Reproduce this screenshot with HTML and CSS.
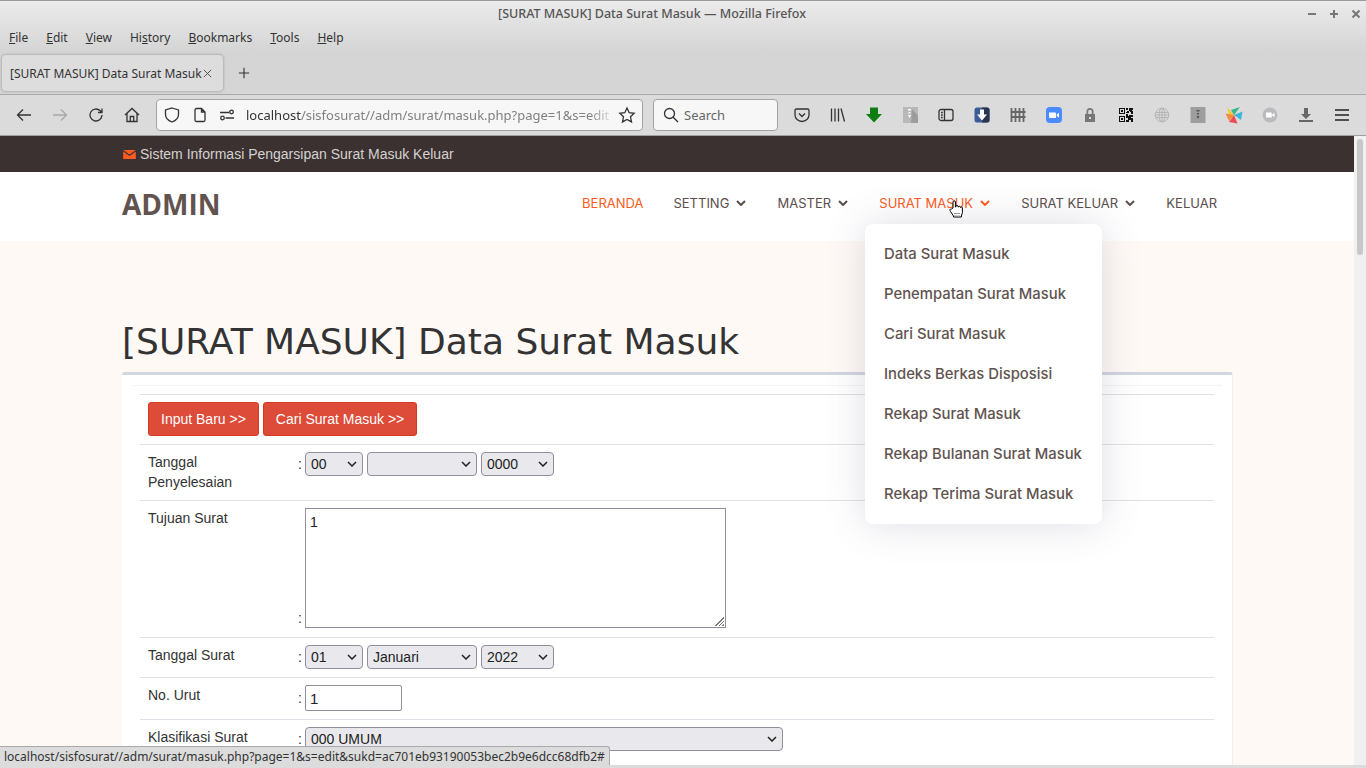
FILE: index.html
```html
<!DOCTYPE html>
<html lang="id">
<head>
<meta charset="utf-8">
<title>[SURAT MASUK] Data Surat Masuk</title>
<link rel="stylesheet" href="styles.css">
</head>
<body>
<div class="browser">
  <div class="topchrome">
    <div class="titlebar">
      <span class="wintitle">[SURAT MASUK] Data Surat Masuk — Mozilla Firefox</span>
      <div class="winctl">
        <svg class="wc" viewBox="0 0 10 10"><path d="M1 5h8"/></svg>
        <svg class="wc" viewBox="0 0 10 10"><path d="M1 5h8M5 1v8"/></svg>
        <svg class="wc" viewBox="0 0 10 10"><path d="M1.5 1.5l7 7M8.5 1.5l-7 7"/></svg>
      </div>
    </div>
    <div class="menubar">
      <span><u>F</u>ile</span><span><u>E</u>dit</span><span><u>V</u>iew</span><span>Hi<u>s</u>tory</span><span><u>B</u>ookmarks</span><span><u>T</u>ools</span><span><u>H</u>elp</span>
    </div>
    <div class="tabstrip">
      <div class="tab">
        <span class="tabtext">[SURAT MASUK] Data Surat Masuk</span>
        <svg class="tabx" viewBox="0 0 10 10"><path d="M1 1l8 8M9 1l-8 8"/></svg>
      </div>
      <svg class="newtab" viewBox="0 0 14 14"><path d="M7 1v12M1 7h12"/></svg>
    </div>
  </div>
  <div class="navbar">
    <div class="navbtns">
      <span class="tb"><svg class="ic" viewBox="0 0 16 16"><path d="M15 8H1.500M7 2.500L1.500 8 7 13.500"/></svg></span>
      <span class="tb dim"><svg class="ic" viewBox="0 0 16 16"><path d="M1 8h13.500M9 2.500L14.500 8 9 13.500"/></svg></span>
      <span class="tb"><svg class="ic" viewBox="0 0 16 16"><path d="M14 8a6 6 0 1 1-1.800-4.300L14 5.500M14 1.500v4h-4"/></svg></span>
      <span class="tb"><svg class="ic" viewBox="0 0 16 16"><path d="M1 8l7-6.500L15 8M3 6.500V14.500h10V6.500M6.300 14.500V9.500h3.400v5"/></svg></span>
    </div>
    <div class="urlbar">
      <svg class="ic shield" viewBox="0 0 16 16"><path d="M8 1l6.500 2v4.500c0 3.800-3 6.200-6.500 7.500-3.500-1.300-6.500-3.700-6.500-7.500V3z"/></svg>
      <svg class="ic pageic" viewBox="0 0 16 16"><path d="M4.500 1.500h5l3.500 3.500v8a1.500 1.500 0 0 1-1.500 1.500h-7A1.500 1.500 0 0 1 3 13V3a1.500 1.500 0 0 1 1.500-1.500zM9.500 1.500V5H13"/></svg>
      <svg class="ic perm" viewBox="0 0 16 16"><path d="M1 5.500h9M6.500 11H15"/><circle cx="12.500" cy="5" r="1.800"/><circle cx="3.500" cy="11" r="1.800"/></svg>
      <div class="urltext"><span class="host">localhost</span>/sisfosurat//adm/surat/masuk.php?page=1&amp;s=edit</div>
      <svg class="ic star" viewBox="0 0 16 16"><path d="M8 1l2.200 4.700 5 .6-3.700 3.500 1 5.100L8 12.400l-4.500 2.500 1-5.100L.8 6.300l5-.6z"/></svg>
    </div>
    <div class="searchbar">
      <svg class="ic" viewBox="0 0 16 16"><circle cx="6.500" cy="6.500" r="5"/><path d="M10.200 10.200L15 15"/></svg>
      <span class="searchtext">Search</span>
    </div>
    <div class="tools">
      <span class="tb"><svg class="ic" viewBox="0 0 16 16"><path d="M2.500 2h11A1.500 1.500 0 0 1 15 3.500V8A7 6.500 0 0 1 1 8V3.500A1.500 1.500 0 0 1 2.500 2zM5 6.500l3 3 3-3"/></svg></span>
      <span class="tb"><svg class="ic" viewBox="0 0 16 16"><path d="M1.500 1.500v13M5 1.500v13M8.500 1.500v13M11 1.500l3.500 13"/></svg></span>
      <span class="tb"><svg class="ic solid" viewBox="0 0 16 16"><path class="f-green" d="M4 .5h8V7h4L8 15.500 0 7h4z"/></svg></span>
      <span class="tb"><svg class="ic solid" viewBox="0 0 16 16"><path class="f-g1" d="M1 0h15v16H1z"/><path class="f-g2" d="M10 2l6 7v7H9z"/><path class="f-w" d="M6 2h3v1.500H6zM6.500 5H8.500v1.500H6.500zM6 8h3l-1.500 3z"/></svg></span>
      <span class="tb"><svg class="ic" viewBox="0 0 16 16"><rect x="1" y="2.500" width="14" height="11" rx="2"/><path d="M6.500 2.500v11M3 5.500h1.800M3 8h1.800M3 10.500h1.800"/></svg></span>
      <span class="tb"><svg class="ic solid" viewBox="0 0 16 16"><rect class="f-navy" x="0.500" y="0.500" width="15" height="15" rx="2.500"/><path class="f-dark" d="M8 0.500h5A2.500 2.500 0 0 1 15.500 3v10a2.500 2.500 0 0 1-2.500 2.500H8z"/><path class="f-w" d="M6 2.500h4v5h3l-5 6-5-6h3z"/></svg></span>
      <span class="tb"><svg class="ic fence" viewBox="0 0 16 16"><path d="M1.500 1v14M5.500 1v14M9.500 1v14M13.500 1v14M0.500 5h15M0.500 10h15"/></svg></span>
      <span class="tb"><svg class="ic solid" viewBox="0 0 16 16"><rect class="f-zoom" width="16" height="16" rx="4"/><path class="f-w" d="M3 5.500h6a1 1 0 0 1 1 1V11H4a1 1 0 0 1-1-1zM10.700 7.500L13 5.800v4.900L10.700 9z"/></svg></span>
      <span class="tb"><svg class="ic solid" viewBox="0 0 16 16"><path class="f-lock" fill-rule="evenodd" d="M4.500 7V4.500a3.500 3.500 0 0 1 7 0V7H13v8H3V7zM6.200 7h3.600V4.500a1.800 1.800 0 0 0-3.600 0zM7 10v2h2v-2z"/></svg></span>
      <span class="tb"><svg class="ic solid" viewBox="0 0 16 16"><path class="f-k" fill-rule="evenodd" d="M1 1h6v6H1zM2 2v4h4V2zM1 9h6v6H1zM2 10v4h4v-4zM3 3h2v2H3zM3 11h2v2H3zM8 1h2v2H8zM11 1h4v2h-1v1h1v3h-2V5h-1V4h-1v2H8V5h1V4h2zM8 7h2v2H8zM11 8h4v2h-2v1h2v4h-2v-2h-2v2H8v-2h2v-2H8V9h3z"/></svg></span>
      <span class="tb"><svg class="ic globe" viewBox="0 0 16 16"><circle cx="8" cy="8" r="6.800"/><ellipse cx="8" cy="8" rx="3" ry="6.800"/><path d="M1.500 5.500h13M1.500 10.500h13M1.200 8h13.600M8 1.200v13.600"/></svg></span>
      <span class="tb"><svg class="ic solid" viewBox="0 0 16 16"><rect class="f-g3" width="15" height="16" x="0.500"/><path class="f-g4" d="M6.500 3h3v1.500h-3zM7 6h2v1.500H7zM6.500 9h3L8 12z"/></svg></span>
      <span class="tb"><svg class="ic wheel solid" viewBox="0 0 16 16"><path class="f-yel" d="M1 0l7 8H3z"/><path class="f-grn" d="M14 0L8 8 5 3z"/><path class="f-cy" d="M16.500 4.500L15 13 8 8z"/><path class="f-red" d="M8 8l3.500 8.500L3 15z"/><path class="f-org" d="M-.5 6.500L8 8l-5 6z"/></svg></span>
      <span class="tb"><svg class="ic solid" viewBox="0 0 16 16"><circle class="f-g5" cx="8" cy="8" r="7.500"/><path class="f-w" d="M4 5.500h5a.8.800 0 0 1 .8.800V10.500H4.800a.8.800 0 0 1-.8-.800zM10.300 7.300L12.500 6v4l-2.200-1.300z"/></svg></span>
      <span class="tb"><svg class="ic solid" viewBox="0 0 16 16"><path class="f-g6" d="M6 1h4v6h3l-5 5-5-5h3zM1 13h14v2H1z"/></svg></span>
      <span class="tb"><svg class="ic burger" viewBox="0 0 16 16"><path d="M1 3h14M1 8h14M1 13h14"/></svg></span>
    </div>
  </div>

  <div class="viewport">
    <div class="page">
      <div class="infobar">
        <div class="wrap infotext">
          <svg class="mail" viewBox="0 0 14 10"><path class="f-orange" d="M0 0h14L7 5zM0 1.700l7 5 7-5V10H0z"/></svg>
          <span>Sistem Informasi Pengarsipan Surat Masuk Keluar</span>
        </div>
      </div>
      <header class="header">
        <div class="wrap headrow">
          <div class="logo">ADMIN</div>
          <ul class="nav">
            <li class="active">BERANDA</li>
            <li>SETTING <svg class="chev" viewBox="0 0 10 6"><path d="M1 1l4 4 4-4"/></svg></li>
            <li>MASTER <svg class="chev" viewBox="0 0 10 6"><path d="M1 1l4 4 4-4"/></svg></li>
            <li class="active">SURAT MASUK <svg class="chev" viewBox="0 0 10 6"><path d="M1 1l4 4 4-4"/></svg></li>
            <li>SURAT KELUAR <svg class="chev" viewBox="0 0 10 6"><path d="M1 1l4 4 4-4"/></svg></li>
            <li>KELUAR</li>
          </ul>
        </div>
      </header>
      <main class="content">
        <h1 class="pagetitle">[SURAT MASUK] Data Surat Masuk</h1>
        <section class="card">
          <div class="cardhead"></div>
          <div class="cardbody">
            <table class="formtable">
              <colgroup><col class="col-l"><col class="col-v"></colgroup>
              <tr>
                <td colspan="2"><div class="btns"><a class="btn">Input Baru &gt;&gt;</a><a class="btn">Cari Surat Masuk &gt;&gt;</a></div></td>
              </tr>
              <tr>
                <td>Tanggal Penyelesaian</td>
                <td><div class="val"><span class="colon">:</span>
                  <select class="sel s-d"><option>00</option></select>
                  <select class="sel s-m"><option></option></select>
                  <select class="sel s-y"><option>0000</option></select>
                </div></td>
              </tr>
              <tr>
                <td>Tujuan Surat</td>
                <td><div class="val end"><span class="colon">:</span><div class="areawrap"><textarea class="area">1</textarea></div></div></td>
              </tr>
              <tr>
                <td>Tanggal Surat</td>
                <td><div class="val"><span class="colon">:</span>
                  <select class="sel s-d"><option>01</option></select>
                  <select class="sel s-m"><option>Januari</option></select>
                  <select class="sel s-y"><option>2022</option></select>
                </div></td>
              </tr>
              <tr>
                <td>No. Urut</td>
                <td><div class="val"><span class="colon">:</span><input class="inp" type="text" value="1"></div></td>
              </tr>
              <tr>
                <td>Klasifikasi Surat</td>
                <td><div class="val"><span class="colon">:</span><select class="sel s-k"><option>000 UMUM</option></select></div></td>
              </tr>
            </table>
          </div>
        </section>
      </main>
    </div>
    <div class="vscroll"><div class="thumb"></div></div>

    <ul class="dropdown">
      <li>Data Surat Masuk</li>
      <li>Penempatan Surat Masuk</li>
      <li>Cari Surat Masuk</li>
      <li>Indeks Berkas Disposisi</li>
      <li>Rekap Surat Masuk</li>
      <li>Rekap Bulanan Surat Masuk</li>
      <li>Rekap Terima Surat Masuk</li>
    </ul>

    <svg class="cursor" viewBox="0 0 14 18"><path d="M4 8V2a1.200 1.200 0 0 1 2.400 0v5h.6V6a1.100 1.100 0 0 1 2 0v1h.6a1 1 0 0 1 1.900 0v.6a1 1 0 0 1 1.900.4v4.500l-1 3.500v1H4.500v-1L1.500 11.500C.5 10 1 8.500 2.500 9z"/><path class="cursor-d" d="M6 13v2.500M8 13v2.500M10 13v2.500"/></svg>

    <div class="status">localhost/sisfosurat//adm/surat/masuk.php?page=1&amp;s=edit&amp;sukd=ac701eb93190053bec2b9e6dcc68dfb2#</div>
  </div>
  <div class="bottomstrip"></div>
</div>
</body>
</html>
```

FILE: styles.css
```css
* { box-sizing: border-box; }
html, body { margin: 0; padding: 0; height: 100%; overflow: hidden; }
body { font-family: "Liberation Sans", Arial, sans-serif; font-size: 14px; color: #333; }
.browser { width: 1366px; height: 768px; display: flex; flex-direction: column; overflow: hidden; }

/* browser chrome */
.topchrome { height: 94px; background: linear-gradient(#ebebeb 0, #d5d5d5 50px, #d5d5d5 100%); border-top: 1px solid #9a9a9a; display: flex; flex-direction: column; font-family: "Noto Sans", sans-serif; }
.titlebar { height: 24px; padding-left: 498px; display: flex; align-items: center; justify-content: space-between; }
.wintitle { font-size: 12.5px; font-weight: 500; color: #555; white-space: nowrap; }
.winctl { display: flex; gap: 12px; padding-right: 5px; padding-top: 1px; }
.wc { width: 10px; height: 10px; fill: none; stroke: #777; stroke-width: 2; }
.menubar { height: 25px; padding-left: 9px; display: flex; align-items: center; gap: 18px; font-size: 12px; color: #333; }
.tabstrip { flex: 1; display: flex; align-items: center; padding: 5px 0 3px 2px; }
.tab { width: 221px; height: 36px; background: #dddddd; border-radius: 4px; box-shadow: 0 0 3px rgba(0,0,0,.35); display: flex; align-items: center; padding-left: 8px; }
.tabtext { font-size: 12px; color: #333; white-space: nowrap; width: 193px; overflow: hidden; }
.tabx { width: 9px; height: 9px; fill: none; stroke: #444; stroke-width: 1; margin-left: 0; }
.newtab { width: 12px; height: 12px; margin-left: 15px; fill: none; stroke: #333; stroke-width: 1.300; }

.navbar { height: 42px; background: #dbdbdb; border-top: 1px solid #a9a9a9; border-bottom: 1px solid #a0a0a0; display: flex; align-items: center; padding: 0 6px; font-family: "Noto Sans", sans-serif; }
.navbtns, .tools { display: flex; }
.tools { margin-left: 6px; }
.tb { width: 36px; height: 32px; display: flex; align-items: center; justify-content: center; }
.ic { width: 16px; height: 16px; fill: none; stroke: #333; stroke-width: 1.300; flex: none; overflow: visible; }
.ic.solid { stroke: none; }
.dim .ic { stroke: #a8a8a8; }
.urlbar { width: 487px; height: 32px; margin-left: 6px; background: #f7f7f7; border: 1px solid #a2a2a2; border-radius: 4px; display: flex; align-items: center; padding-left: 7px; font-size: 13px; color: #808080; }
.shield { margin-left: 0; }
.pageic { margin-left: 12px; }
.perm { margin-left: 11px; }
.urltext { margin-left: 11px; width: 369px; white-space: nowrap; mask-image: linear-gradient(to right, #000 93%, transparent); }
.host { color: #333; }
.star { margin-left: 4px; }
.searchbar { width: 125px; height: 32px; margin-left: 10px; background: #f7f7f7; border: 1px solid #a2a2a2; border-radius: 4px; display: flex; align-items: center; padding-left: 9px; font-size: 13px; color: #666; }
.searchtext { margin-left: 5px; }
.f-green { fill: #0e7d12; }
.f-g1 { fill: #b8b8b8; }
.f-g2 { fill: #9c9c9c; }
.f-w { fill: #fff; }
.f-navy { fill: #3b5a9a; }
.f-dark { fill: #2a3550; }
.fence { stroke: #666; stroke-width: 1.800; }
.f-zoom { fill: #4a8cff; }
.f-lock { fill: #777; }
.f-k { fill: #111; }
.globe { stroke: #b5b5b5; stroke-width: 1; }
.f-g3 { fill: #9e9e9e; }
.f-g4 { fill: #555; }
.f-yel { fill: #f7c92e; }
.f-grn { fill: #37b88a; }
.f-cy { fill: #38b6dc; }
.f-red { fill: #ee4b55; }
.f-org { fill: #f58b3c; }
.f-g5 { fill: #bbbbbf; }
.f-g6 { fill: #666; }
.burger { stroke: #222; stroke-width: 1.500; }

/* viewport */
.viewport { flex: 1; min-height: 0; position: relative; display: flex; background: #fff9f6; }
.page { flex: 1; min-width: 0; overflow: hidden; }
.vscroll { width: 12px; background: #f0f0f0; padding: 3px 3px 0; }
.thumb { height: 116px; border-radius: 3px; background: #c8c8c8; }
.bottomstrip { height: 3px; background: #dcdcdc; }

.wrap { width: 1110px; margin-left: 122px; }
.infobar { height: 36px; background: #3b3130; }
.infotext { height: 36px; display: flex; align-items: center; color: #d4d2d0; font-size: 14px; }
.mail { width: 13px; height: 9px; margin: 0 4px 0 1px; }
.f-orange { fill: #fd5b22; }

.header { height: 69px; background: #fff; }
.headrow { height: 62px; display: flex; align-items: center; justify-content: space-between; padding-right: 15px; }
.logo { font-family: "Open Sans", sans-serif; font-weight: 700; font-size: 28px; color: #62534f; padding-top: 2px; }
.nav { display: flex; gap: 30px; list-style: none; margin: 0; padding: 0; font-family: Inter, sans-serif; font-size: 13px; color: #5a4e4b; }
.nav li { display: flex; align-items: center; white-space: pre; }
.nav .active { color: #fd5b22; }
.chev { width: 10px; height: 6px; margin: 0 1.500px 0 3px; fill: none; stroke: currentColor; stroke-width: 2; }

.content { padding: 0 122px; }
.pagetitle { margin: 0; height: 131px; padding-top: 78px; font-family: "DejaVu Sans", sans-serif; font-weight: 400; font-size: 36px; line-height: 46px; color: #333; white-space: nowrap; }
.card { width: 1111px; min-height: 500px; background: #fff; border-top: 3px solid #d2d6de; border-right: 1px solid #f5eeea; border-radius: 3px; }
.cardhead { height: 11px; margin: 0 10px; border-bottom: 1px solid #f4f4f4; }
.cardbody { padding: 8px 17px 0 18px; }
.formtable { width: 1074px; border-collapse: collapse; table-layout: fixed; }
.col-l { width: 150px; }
.formtable td { border-top: 1px solid #e0e0e6; padding: 7px 8px 8px; line-height: 20px; vertical-align: top; }
.btns { display: flex; gap: 4px; }
.btn { display: block; height: 34px; padding: 6px 12px; background: #dd4b39; border: 1px solid #d73925; border-radius: 3px; color: #fff; font-size: 14px; line-height: 20px; }
.val { display: flex; align-items: center; gap: 4px; }
.val.end { align-items: flex-end; margin-bottom: 1px; }
.colon { width: 3px; }
.sel { appearance: none; height: 24px; padding: 0 16px 0 5px; font: 14px "Liberation Sans", Arial, sans-serif; color: #222; border: 1px solid #8f8f9d; border-radius: 4px; background-color: #e9e9ed; background-image: url("data:image/svg+xml,%3Csvg xmlns='http://www.w3.org/2000/svg' width='10' height='6'%3E%3Cpath d='M1 1l4 4 4-4' fill='none' stroke='%23222' stroke-width='1.500'/%3E%3C/svg%3E"); background-repeat: no-repeat; background-position: right 5px center; }
.s-d { width: 58px; }
.s-m { width: 110px; }
.s-y { width: 73px; }
.s-k { width: 478px; }
.areawrap { position: relative; width: 421px; height: 120px; }
.areawrap::after { content: ""; position: absolute; right: 2px; bottom: 2px; width: 10px; height: 10px; background: repeating-linear-gradient(135deg, #777 0 1px, transparent 1px 2.500px); clip-path: polygon(100% 0, 100% 100%, 0 100%); }
.area { width: 421px; height: 120px; padding: 5px 4px; font: 14px "Liberation Sans", Arial, sans-serif; color: #222; border: 1px solid #8f8f9d; border-radius: 0; display: block; resize: none; }
.inp { width: 97px; height: 26px; padding: 1px 4px; font: 15px "Liberation Sans", Arial, sans-serif; color: #222; border: 1px solid #8f8f9d; border-radius: 2px; }

/* overlays */
.dropdown { position: absolute; left: 865px; top: 88px; width: 237px; height: 300px; margin: 0; padding: 10px 0; list-style: none; background: #fff; border-radius: 8px; box-shadow: 0 0 40px rgba(85,85,120,.2); font-family: Inter, sans-serif; font-weight: 500; font-size: 14.850px; color: #5f5350; }
.dropdown li { height: 40px; line-height: 40px; padding-left: 19px; white-space: nowrap; }
.cursor { position: absolute; left: 949px; top: 64px; width: 14px; height: 18px; fill: #fff; stroke: #000; stroke-width: 1; }
.cursor-d { stroke-dasharray: 1 1; stroke-width: .8; }
.status { position: absolute; left: 0; bottom: 0; height: 19px; line-height: 19px; padding: 0 4px; background: #dcdcdc; border-top: 1px solid #a9a9a9; border-right: 1px solid #a9a9a9; border-top-right-radius: 3px; font-family: "Noto Sans", sans-serif; font-size: 12px; color: #333; white-space: nowrap; }
```
